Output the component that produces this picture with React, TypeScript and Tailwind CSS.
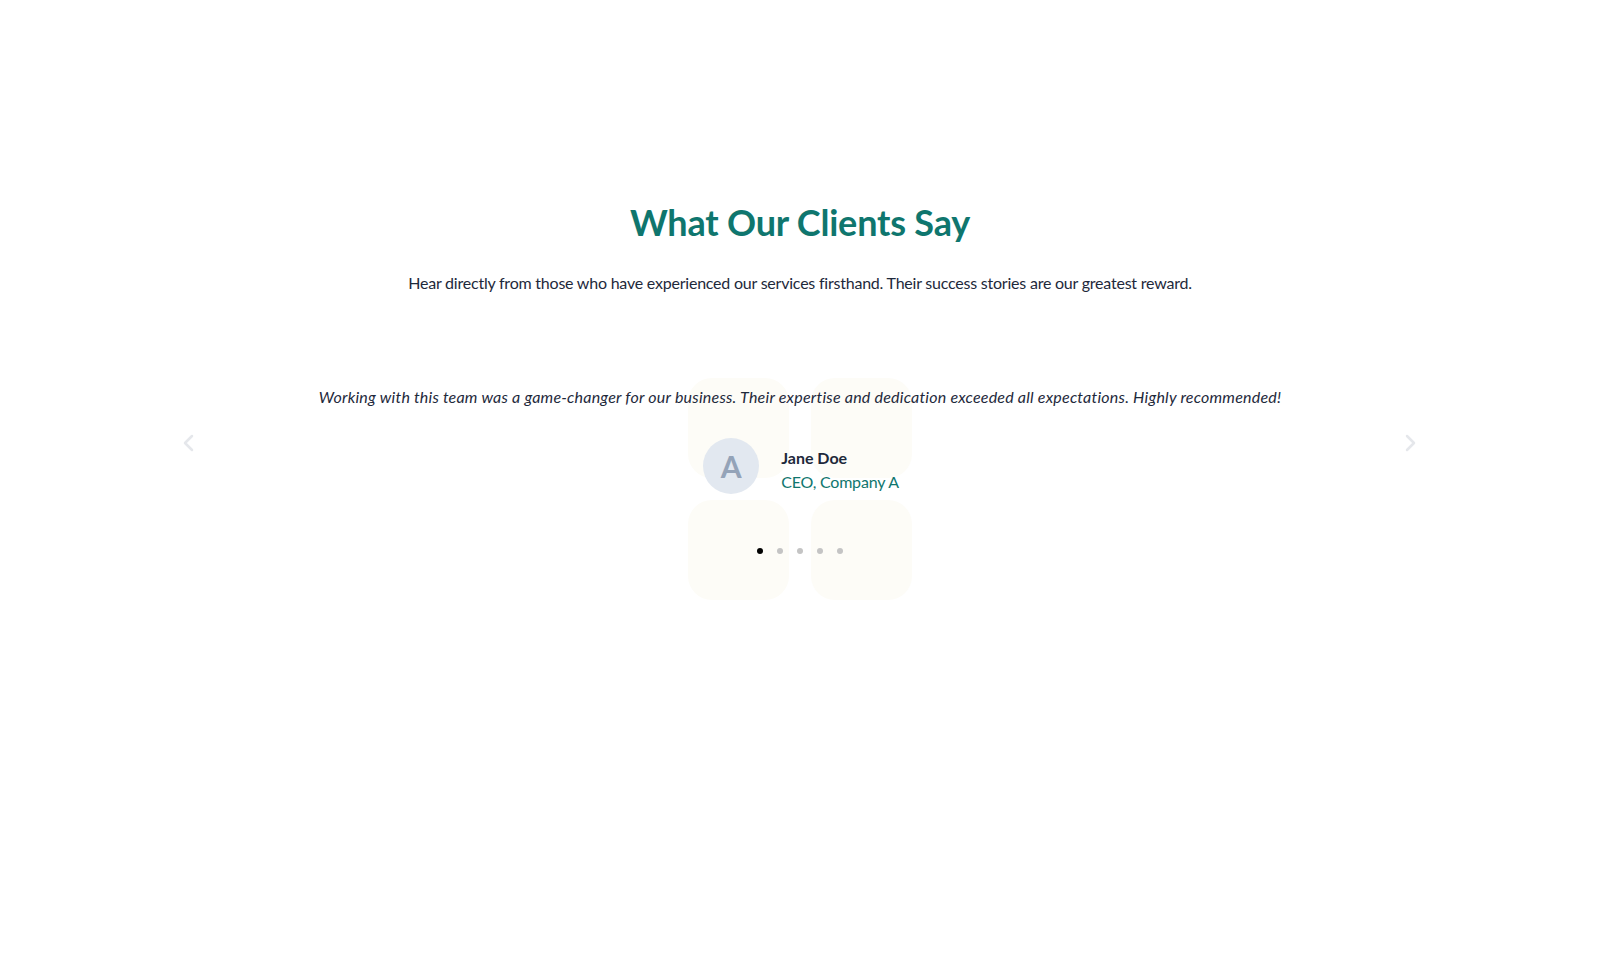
import React, { useState } from "react";

const testimonials = [
  {
    quote:
      "Working with this team was a game-changer for our business. Their expertise and dedication exceeded all expectations. Highly recommended!",
    name: "Jane Doe",
    role: "CEO, Company A",
    initial: "A",
  },
  { quote: "", name: "John Smith", role: "CTO, Company B", initial: "B" },
  { quote: "", name: "Mary Major", role: "COO, Company C", initial: "C" },
  { quote: "", name: "Sam Lee", role: "CFO, Company D", initial: "D" },
  { quote: "", name: "Alex Kim", role: "Founder, Company E", initial: "E" },
];

function Chevron({ dir }: { dir: "left" | "right" }) {
  return (
    <svg width="24" height="24" viewBox="0 0 24 24" fill="none" stroke="currentColor" strokeWidth="2.5" strokeLinecap="round" strokeLinejoin="round">
      {dir === "left" ? <path d="M15 5l-7 7 7 7" /> : <path d="M9 5l7 7-7 7" />}
    </svg>
  );
}

export default function App() {
  const [active, setActive] = useState(0);
  const t = testimonials[active];
  return (
    <div className="min-h-screen bg-white text-[#1e293b]" style={{ fontFamily: "Lato, 'Noto Sans', sans-serif" }}>
      <section className="pt-[202px] flex flex-col items-center">
        <h2 className="text-[36px] leading-10 font-bold text-[#0f766e] tracking-[-0.2px]">What Our Clients Say</h2>
        <p className="mt-[29px] text-base leading-6 text-[#1e293b] tracking-[-0.22px]">
          Hear directly from those who have experienced our services firsthand. Their success stories are our greatest reward.
        </p>

        <div className="relative mt-[90px] w-[1280px]">
          {/* soft tiles behind the slide */}
          <div className="absolute left-1/2 top-[-7px] -translate-x-1/2 grid grid-cols-2 gap-[22px]">
            <div className="w-[101px] h-[100px] rounded-[24px] bg-[#fdfcf7]" />
            <div className="w-[101px] h-[100px] rounded-[24px] bg-[#fdfcf7]" />
            <div className="w-[101px] h-[100px] rounded-[24px] bg-[#fdfcf7]" />
            <div className="w-[101px] h-[100px] rounded-[24px] bg-[#fdfcf7]" />
          </div>

          <button
            onClick={() => setActive((active + 4) % 5)}
            className="absolute left-[17px] top-[46px] text-[#e5e7eb]"
          >
            <Chevron dir="left" />
          </button>
          <button
            onClick={() => setActive((active + 1) % 5)}
            className="absolute right-[18px] top-[46px] text-[#e5e7eb]"
          >
            <Chevron dir="right" />
          </button>

          <div className="relative flex flex-col items-center">
            <p className="italic text-base leading-6 text-[#1e293b] tracking-[0.22px]">{t.quote}</p>
            <div className="mt-[29px] flex items-center gap-[22px] pl-[2px]">
              <div className="w-14 h-14 rounded-full bg-[#e2e8f0] flex items-center justify-center text-[30px] font-bold text-[#94a3b8]">
                {t.initial}
              </div>
              <div className="flex flex-col pt-2">
                <span className="text-base leading-6 font-bold text-[#1e293b]">{t.name}</span>
                <span className="text-base leading-6 text-[#0f766e] tracking-[-0.2px]">{t.role}</span>
              </div>
            </div>
            <div className="mt-[54px] flex items-center gap-[14px]">
              {testimonials.map((_, i) => (
                <button
                  key={i}
                  onClick={() => setActive(i)}
                  className={i === active ? "w-1.5 h-1.5 rounded-full bg-black" : "w-1.5 h-1.5 rounded-full bg-[#c4c4c4]"}
                />
              ))}
            </div>
          </div>
        </div>
      </section>
    </div>
  );
}
